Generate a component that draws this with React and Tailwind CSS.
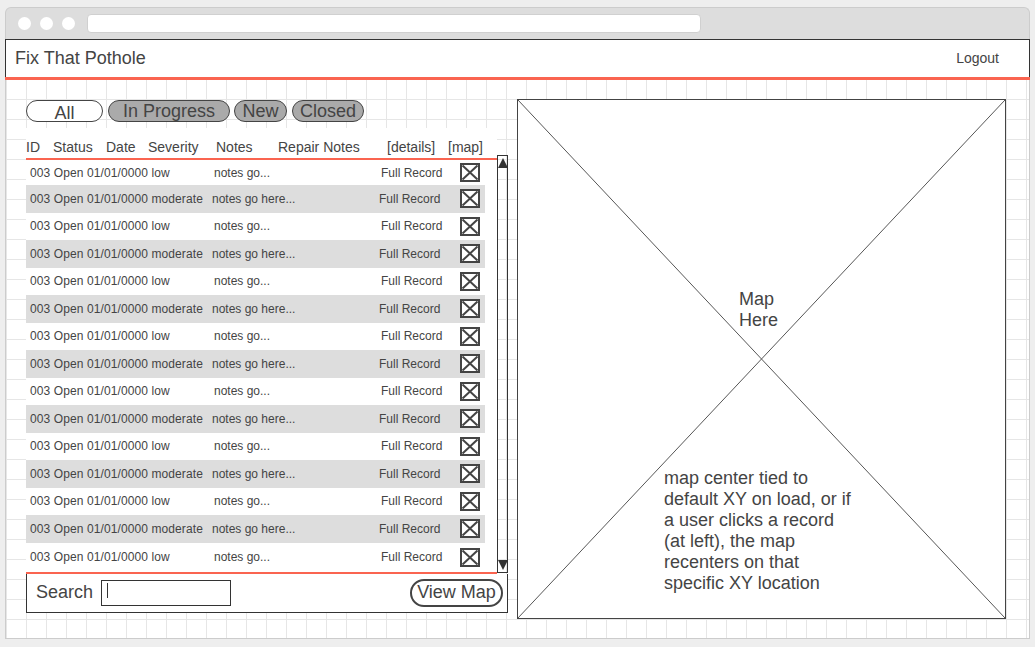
import React from 'react';

const rows = Array.from({ length: 15 }, (_, i) => i % 2 === 1);

function MapIcon() {
  return (
    <svg width="20" height="19" viewBox="0 0 20 19" className="block">
      <rect x="1" y="1" width="18" height="17" fill="white" stroke="#444" strokeWidth="2" />
      <line x1="2.5" y1="2.5" x2="17.5" y2="16.5" stroke="#444" strokeWidth="2" />
      <line x1="17.5" y1="2.5" x2="2.5" y2="16.5" stroke="#444" strokeWidth="2" />
    </svg>
  );
}

function Row({ moderate, index, last }) {
  const height = index === 0 ? 'h-[25px]' : last ? 'h-[29px]' : 'h-[27.5px]';
  return (
    <div
      className={`${height} w-[459px] flex items-center text-[12px] text-[#444] ${
        moderate ? 'bg-[#dddddd]' : last ? 'bg-transparent' : 'bg-white'
      }`}
    >
      <span className={`pl-[4px] whitespace-nowrap tracking-[0.1px] ${moderate ? 'w-[186px]' : 'w-[188px]'}`}>
        003 Open 01/01/0000 {moderate ? 'moderate' : 'low'}
      </span>
      <span className="w-[167px] whitespace-nowrap">{moderate ? 'notes go here...' : 'notes go...'}</span>
      <span className={`whitespace-nowrap ${moderate ? 'w-[81px]' : 'w-[79px]'}`}>Full Record</span>
      <MapIcon />
    </div>
  );
}

function Pill({ children, active, className }) {
  return (
    <div
      className={`h-[22px] rounded-full border border-[#444] flex items-center justify-center text-[18px] leading-none text-[#444] ${
        active ? 'bg-white' : 'bg-[#aaaaaa]'
      } ${className}`}
    >
      <span className={active ? 'pt-[4px]' : ''}>{children}</span>
    </div>
  );
}

export default function App() {
  return (
    <div
      className="min-h-screen bg-[#eeeeee] pt-[7px] pl-[5px]"
      style={{ fontFamily: '"Liberation Sans", Arial, sans-serif' }}
    >
      <div className="w-[1025px]">
        {/* browser chrome */}
        <div className="h-[32px] border border-b-0 border-[#cccccc] rounded-t-[6px] bg-[#dddddd] flex items-center pl-[12px]">
          <div className="w-[13px] h-[13px] rounded-full bg-white" />
          <div className="w-[13px] h-[13px] rounded-full bg-white ml-[9px]" />
          <div className="w-[13px] h-[13px] rounded-full bg-white ml-[9px]" />
          <div className="ml-[12px] w-[614px] h-[19px] rounded-[4px] bg-white border border-[#d0d0d0]" />
        </div>

        {/* app header */}
        <div className="h-[38px] border border-b-0 border-[#333] bg-white flex items-center justify-between pl-[9px] pr-[30px]">
          <span className="text-[18px] text-[#444]">Fix That Pothole</span>
          <span className="text-[14px] text-[#444]">Logout</span>
        </div>
        <div className="h-[3px] bg-[#fa6450]" />

        {/* content */}
        <div className="h-[559px] border border-t-0 border-[#cccccc] bg-white bg-[linear-gradient(to_right,#e6e6e6_1px,transparent_1px),linear-gradient(to_bottom,#e6e6e6_1px,transparent_1px)] bg-[length:20px_20px] bg-[position:0_19px] flex pt-[19px] pl-[20px] gap-[9px]">
          {/* left column */}
          <div className="w-[482px] mt-[1px] flex flex-col">
            <div className="flex h-[22px]">
              <Pill active className="w-[77px]">All</Pill>
              <Pill className="w-[122px] ml-[5px]">In Progress</Pill>
              <Pill className="w-[53px] ml-[4px]">New</Pill>
              <Pill className="w-[72px] ml-[5px]">Closed</Pill>
            </div>

            <div className="flex items-start mt-[6px]">
              <div className="w-[471px] flex flex-col">
                <div className="h-[30px] bg-white flex items-end pb-[3px] text-[14px] leading-[16px] text-[#444] whitespace-nowrap">
                  <span className="w-[27px]">ID</span>
                  <span className="w-[53px]">Status</span>
                  <span className="w-[42px]">Date</span>
                  <span className="w-[68px]">Severity</span>
                  <span className="w-[62px]">Notes</span>
                  <span className="w-[109px]">Repair Notes</span>
                  <span className="w-[61px]">[details]</span>
                  <span>[map]</span>
                </div>
                <div className="h-[2px] bg-[#fa6450]" />
                <div className="bg-white">
                  {rows.map((moderate, i) => (
                    <Row key={i} index={i} moderate={moderate} last={i === rows.length - 1} />
                  ))}
                </div>
                <div className="h-[3px] bg-[#fa6450]" />
              </div>

              {/* scrollbar */}
              <div className="w-[11px] h-[418px] mt-[27px] border border-[#333] flex flex-col justify-between items-center py-[2px]">
                <div className="w-0 h-0 border-l-[5px] border-r-[5px] border-b-[10px] border-l-transparent border-r-transparent border-b-[#333]" />
                <div className="w-0 h-0 border-l-[5px] border-r-[5px] border-t-[10px] border-l-transparent border-r-transparent border-t-[#333]" />
              </div>
            </div>

            {/* search bar */}
            <div className="h-[39px] -mt-[1px] border border-t-0 border-[#333] bg-white flex items-center pl-[9px] pr-[4px]">
              <span className="text-[18px] text-[#444]">Search</span>
              <div className="ml-[8px] w-[130px] h-[26px] border border-[#333] bg-white flex items-center pl-[5px]">
                <div className="w-px h-[15px] bg-[#333] -mt-[4px]" />
              </div>
              <div className="ml-auto w-[93px] h-[28px] rounded-full border-2 border-[#444] flex items-center justify-center text-[18px] text-[#444]">
                View Map
              </div>
            </div>
          </div>

          {/* map */}
          <div className="relative w-[489px] h-[520px] border border-[#444] bg-white text-[18px] leading-[21px] text-[#444]">
            <svg className="absolute inset-0 w-full h-full" preserveAspectRatio="none" viewBox="0 0 100 100">
              <line x1="0" y1="0" x2="100" y2="100" stroke="#555" strokeWidth="1" vectorEffect="non-scaling-stroke" />
              <line x1="100" y1="0" x2="0" y2="100" stroke="#555" strokeWidth="1" vectorEffect="non-scaling-stroke" />
            </svg>
            <div className="relative pt-[189px] pl-[221px]">
              Map
              <br />
              Here
            </div>
            <p className="relative mt-[137px] ml-[146px] w-[196px]">
              map center tied to default XY on load, or if a user clicks a record (at left), the map recenters on that specific XY location
            </p>
          </div>
        </div>
      </div>
    </div>
  );
}
